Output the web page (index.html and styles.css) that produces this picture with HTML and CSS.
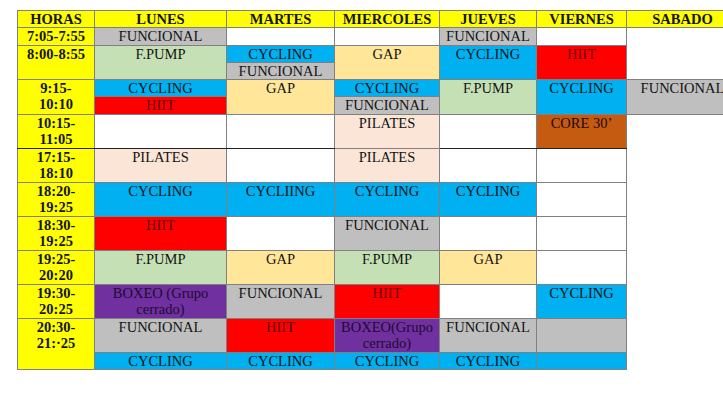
FILE: index.html
```html
<!DOCTYPE html>
<html lang="es">
<head>
<meta charset="utf-8">
<title>Horario</title>
<link rel="stylesheet" href="styles.css">
</head>
<body>
<div class="page">
<table class="sched">
  <colgroup>
    <col class="c-hr"><col class="c-lu"><col class="c-ma"><col class="c-mi"><col class="c-ju"><col class="c-vi"><col class="c-sa">
  </colgroup>
  <tr class="u">
    <th>HORAS</th><th>LUNES</th><th>MARTES</th><th>MIERCOLES</th><th>JUEVES</th><th>VIERNES</th><th>SABADO</th>
  </tr>
  <tr class="u">
    <td class="hr">7:05-7:55</td>
    <td class="gray">FUNCIONAL</td>
    <td></td>
    <td></td>
    <td class="gray">FUNCIONAL</td>
    <td></td>
    <td class="blank" rowspan="3"></td>
  </tr>
  <tr class="u">
    <td class="hr" rowspan="2">8:00-8:55</td>
    <td class="green" rowspan="2">F.PUMP</td>
    <td class="blue">CYCLING</td>
    <td class="gap" rowspan="2">GAP</td>
    <td class="blue" rowspan="2">CYCLING</td>
    <td class="red" rowspan="2">HIIT</td>
  </tr>
  <tr class="u">
    <td class="gray">FUNCIONAL</td>
  </tr>
  <tr class="u">
    <td class="hr" rowspan="2">9:15-<br>10:10</td>
    <td class="blue">CYCLING</td>
    <td class="gap" rowspan="2">GAP</td>
    <td class="blue">CYCLING</td>
    <td class="green" rowspan="2">F.PUMP</td>
    <td class="blue" rowspan="2">CYCLING</td>
    <td class="gray" rowspan="2">FUNCIONAL</td>
  </tr>
  <tr class="u">
    <td class="red">HIIT</td>
    <td class="gray">FUNCIONAL</td>
  </tr>
  <tr class="u">
    <td class="hr dark-b" rowspan="2">10:15-<br>11:05</td>
    <td class="dark-b" rowspan="2"></td>
    <td class="dark-b" rowspan="2"></td>
    <td class="pil" rowspan="2">PILATES</td>
    <td class="dark-b" rowspan="2"></td>
    <td class="brown dark-b" rowspan="2">CORE 30’</td>
    <td class="blank" rowspan="15"></td>
  </tr>
  <tr class="u"></tr>
  <tr class="u">
    <td class="hr" rowspan="2">17:15-<br>18:10</td>
    <td class="pil" rowspan="2">PILATES</td>
    <td rowspan="2"></td>
    <td class="pil" rowspan="2">PILATES</td>
    <td rowspan="2"></td>
    <td rowspan="2"></td>
  </tr>
  <tr class="u"></tr>
  <tr class="u">
    <td class="hr" rowspan="2">18:20-<br>19:25</td>
    <td class="blue" rowspan="2">CYCLING</td>
    <td class="blue" rowspan="2">CYCLIING</td>
    <td class="blue" rowspan="2">CYCLING</td>
    <td class="blue" rowspan="2">CYCLING</td>
    <td rowspan="2"></td>
  </tr>
  <tr class="u"></tr>
  <tr class="u">
    <td class="hr" rowspan="2">18:30-<br>19:25</td>
    <td class="red" rowspan="2">HIIT</td>
    <td rowspan="2"></td>
    <td class="gray" rowspan="2">FUNCIONAL</td>
    <td rowspan="2"></td>
    <td rowspan="2"></td>
  </tr>
  <tr class="u"></tr>
  <tr class="u">
    <td class="hr" rowspan="2">19:25-<br>20:20</td>
    <td class="green" rowspan="2">F.PUMP</td>
    <td class="gap" rowspan="2">GAP</td>
    <td class="green" rowspan="2">F.PUMP</td>
    <td class="gap" rowspan="2">GAP</td>
    <td rowspan="2"></td>
  </tr>
  <tr class="u"></tr>
  <tr class="u">
    <td class="hr" rowspan="2">19:30-<br>20:25</td>
    <td class="purple" rowspan="2">BOXEO (Grupo cerrado)</td>
    <td class="gray" rowspan="2">FUNCIONAL</td>
    <td class="red" rowspan="2">HIIT</td>
    <td rowspan="2"></td>
    <td class="blue" rowspan="2">CYCLING</td>
  </tr>
  <tr class="u"></tr>
  <tr class="u">
    <td class="hr" rowspan="3">20:30-<br>21:·25</td>
    <td class="gray" rowspan="2">FUNCIONAL</td>
    <td class="red" rowspan="2">HIIT</td>
    <td class="purple" rowspan="2">BOXEO(Grupo cerrado)</td>
    <td class="gray" rowspan="2">FUNCIONAL</td>
    <td class="gray" rowspan="2"></td>
  </tr>
  <tr class="u"></tr>
  <tr class="u">
    <td class="blue">CYCLING</td>
    <td class="blue">CYCLING</td>
    <td class="blue">CYCLING</td>
    <td class="blue">CYCLING</td>
    <td class="blue"></td>
  </tr>
</table>
</div>
</body>
</html>
```

FILE: styles.css
```css
html, body {
  margin: 0;
  padding: 0;
  background: #ffffff;
  overflow: hidden;
}

.page {
  padding: 10px 0 0 17px;
  width: 760px;
}

.sched {
  border-collapse: collapse;
  table-layout: fixed;
  width: 721px;
  font-family: "Liberation Serif", "Times New Roman", serif;
  font-size: 14.5px;
  line-height: 16.3px;
  color: #141414;
}

.c-hr { width: 77px; }
.c-lu { width: 132px; }
.c-ma { width: 108px; }
.c-mi { width: 105px; }
.c-ju { width: 97px; }
.c-vi { width: 90px; }
.c-sa { width: 112px; }

.u { height: 17px; }

.sched th,
.sched td {
  border: 1px solid #808080;
  padding: 0 2px;
  text-align: center;
  vertical-align: top;
  white-space: normal;
}

.sched th {
  background: #ffff00;
  font-weight: bold;
}

.sched .hr {
  background: #ffff00;
  font-weight: bold;
}

.sched .blank {
  border: none;
}

.gray { background: #bfbfbf; }
.green { background: #c5e0b4; }
.blue { background: #00b0f0; }
.red { background: #ff0000; color: #6a0000; }
.gap { background: #ffe699; }
.pil { background: #fbe5d6; }
.purple { background: #7030a0; color: #1e0b30; }
.brown { background: #c55a11; color: #1a0a00; }

.sched .dark-b { border-bottom-color: #222222; }
```
